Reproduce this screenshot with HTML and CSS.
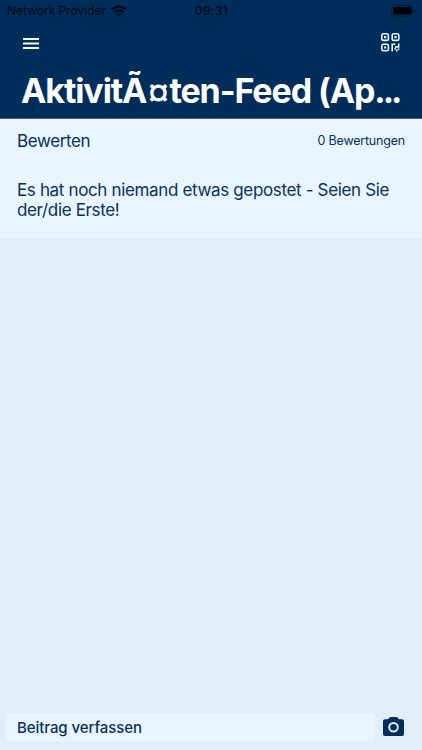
FILE: index.html
```html
<!DOCTYPE html>
<html lang="de">
<head>
<meta charset="utf-8">
<title>Aktivitäten-Feed</title>
<link rel="stylesheet" href="styles.css">
</head>
<body>
<div class="app">
  <header class="header">
    <div class="status">
      <div class="carrier"><span class="carrier-name">Network Provider</span>
        <svg class="wifi" width="16" height="12" viewBox="0 0 16 12"><g fill="none" stroke="currentColor" stroke-width="2.1"><path d="M1 4.4Q8-1.8 15 4.4"/><path d="M3.6 7.1Q8 3.4 12.4 7.1"/></g><path d="M5.6 9.1Q8 7.2 10.4 9.1L8 11.6Z" fill="currentColor"/></svg>
      </div>
      <span class="time">09:31</span>
      <svg class="battery" width="25" height="12" viewBox="0 0 25 12"><rect x=".5" y=".5" width="21" height="10.5" rx="3.2" fill="none" stroke="#001d40"/><rect x="2" y="2" width="18.5" height="7.5" rx="2" fill="#000309"/><path d="M23 4v3.8q1.300-.5 1.300-1.900T23 4Z" fill="#001d40"/></svg>
    </div>
    <div class="toolbar">
      <svg width="16" height="11" viewBox="0 0 16 11" fill="#f3f8ff"><path d="M0 0h16v1.900H0zM0 4.500h16v1.900H0zM0 9h16v1.900H0z"/></svg>
      <svg class="qr" width="19" height="19" viewBox="0 0 19 19"><g fill="none" stroke="#e6f3fd" stroke-width="1.600"><rect x=".8" y=".8" width="6.600" height="6.600" rx="1.700"/><rect x="11.200" y=".8" width="6.600" height="6.600" rx="1.700"/><rect x=".8" y="11.200" width="6.600" height="6.600" rx="1.700"/></g><path fill="#e6f3fd" d="M3 3h2.200v2.200H3zM13.400 3h2.200v2.200h-2.200zM3 13.400h2.200v2.200H3zM10.400 10.400h4v1.600h-2.400v6.500h-1.600zM16.900 10.400h1.600v4.300h-4.300v-1.600h2.700zM13.300 14.700h1.600v1.700h-1.600zM14.900 16.400h1.700v2.100h-1.700zM16.800 15.500h1.700v1.500h-1.700z"/></svg>
    </div>
    <h1 class="title">AktivitÃ<span class="currency">¤</span>ten-Feed (Ap<span class="dots">...</span></h1>
  </header>
  <section class="rating"><span class="rating-label">Bewerten</span><span class="rating-count">0 Bewertungen</span></section>
  <p class="empty">Es hat noch niemand etwas gepostet - Seien Sie<br>der/die Erste!</p>
  <main class="feed"></main>
  <footer class="composer">
    <div class="input"><span>Beitrag verfassen</span></div>
    <svg class="camera" width="21" height="19" viewBox="0 0 21 19"><path fill="#002d59" fill-rule="evenodd" d="M7 0h7l2 2.200h3a2 2 0 0 1 2 2V17a2 2 0 0 1-2 2H2a2 2 0 0 1-2-2V4.200a2 2 0 0 1 2-2h3ZM10.500 5a5.300 5.300 0 1 0 0 10.600a5.300 5.300 0 1 0 0-10.600Z"/><circle cx="10.500" cy="10.300" r="3.300" fill="#002d59"/></svg>
  </footer>
</div>
</body>
</html>
```
FILE: styles.css
```css
* { box-sizing: border-box; }
body { margin: 0; font-family: Inter, "Liberation Sans", sans-serif; color: #0c2f5a; }
svg { display: block; flex: none; }
span, h1, p { white-space: nowrap; }
.app { width: 422px; height: 750px; display: flex; flex-direction: column; background: #e1eef6; }
.header { height: 119px; flex: none; background: #002d59; border-bottom: 1px solid #46627f; }
.status { height: 22px; display: grid; grid-template-columns: 1fr auto 1fr; align-items: center; padding: 0 6px 1px 7px; color: #00091a; }
.carrier { display: flex; align-items: center; gap: 5px; }
.carrier-name { font-size: 12px; }
.time { font-size: 12px; font-weight: 500; letter-spacing: 0.4px; }
.battery { justify-self: end; }
.toolbar { height: 42px; display: flex; align-items: center; justify-content: space-between; padding: 0 22px 0 23px; }
.qr { margin-top: -1px; }
.title { margin: 6px 0 0 21px; font-size: 34px; line-height: 41px; font-weight: 700; letter-spacing: -1.100px; color: #fff; }
.currency { display: inline-block; width: 23px; font-size: 26px; line-height: 20px; text-align: center; vertical-align: 2px; -webkit-text-stroke: 0.8px #fff; }
.dots { letter-spacing: -3px; }
.rating { height: 44px; flex: none; display: flex; align-items: center; justify-content: space-between; padding: 0 17px; background: #e8f5fe; border-bottom: 1px solid #e6f0f9; }
.rating-label { font-size: 17px; letter-spacing: -0.380px; }
.rating-count { font-size: 12.500px; letter-spacing: -0.200px; }
.empty { height: 75px; flex: none; margin: 0; padding: 17px; background: #e8f5fe; font-size: 17px; line-height: 20.400px; letter-spacing: -0.350px; }
.feed { flex: 1; }
.composer { height: 38px; flex: none; display: flex; align-items: flex-start; padding: 1px 18px 0 6px; justify-content: space-between; }
.input { width: 369px; height: 28px; display: flex; align-items: center; padding-left: 11px; border-radius: 4px; background: #e8f5fe; font-size: 15px; font-weight: 500; letter-spacing: -0.080px; }
.camera { margin-top: 4px; }
```
